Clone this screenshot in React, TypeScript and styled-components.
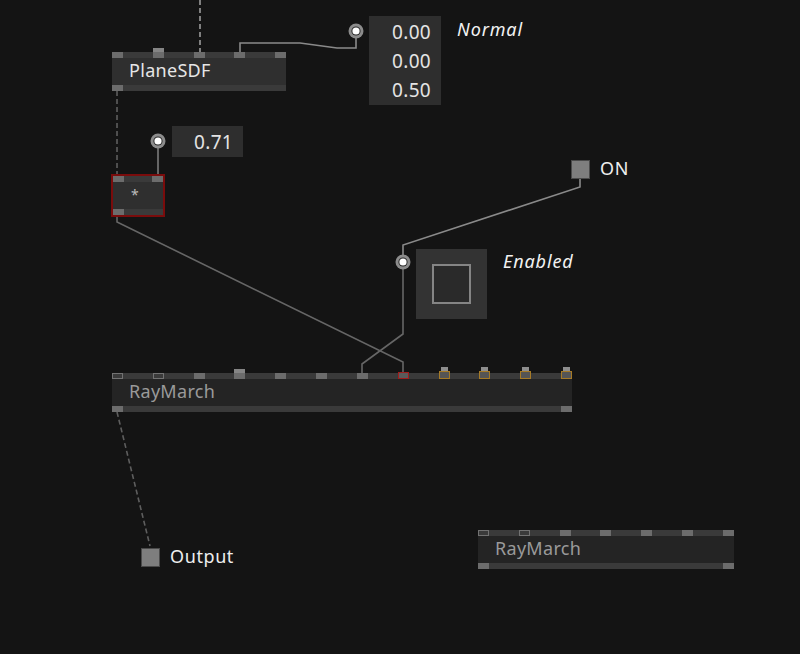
import styled, { createGlobalStyle, css } from 'styled-components';

type PinKind = 'plain' | 'raised' | 'hollow' | 'error' | 'warn';

interface NodeData {
  id: string;
  label: string;
  x: number;
  y: number;
  width: number;
  top: PinKind[];
  bottom: number;
  dim?: boolean;
  selected?: boolean;
  body?: 'light' | 'dark';
}

const NODES: NodeData[] = [
  { id: 'plane', label: 'PlaneSDF', x: 112, y: 52, width: 174, top: ['plain', 'raised', 'plain', 'plain', 'plain'], bottom: 1, body: 'light' },
  { id: 'mul', label: '*', x: 111, y: 174, width: 54, top: ['plain', 'plain'], bottom: 1, selected: true, body: 'light' },
  {
    id: 'ray1',
    label: 'RayMarch',
    x: 112,
    y: 373,
    width: 460,
    top: ['hollow', 'hollow', 'plain', 'raised', 'plain', 'plain', 'plain', 'error', 'warn', 'warn', 'warn', 'warn'],
    bottom: 2,
    dim: true,
  },
  {
    id: 'ray2',
    label: 'RayMarch',
    x: 478,
    y: 530,
    width: 256,
    top: ['hollow', 'hollow', 'plain', 'plain', 'plain', 'plain', 'plain'],
    bottom: 2,
    dim: true,
  },
];

const WIRES = [
  { d: 'M200 0 L200 52', color: '#9c9c9c', dashed: true },
  { d: 'M117 91 L117 175', color: '#5e5e5e', dashed: true },
  { d: 'M117 412 L150 546', color: '#5e5e5e', dashed: true },
  { d: 'M240 52 L240 43 L300 43 L337 48 L356 48 L356 38', color: '#8a8a8a' },
  { d: 'M158 148 L158 175', color: '#7a7a7a' },
  { d: 'M117 214 L117 222 L403 362 L403 373', color: '#666666' },
  { d: 'M580 178 L580 187 L403 245 L403 256', color: '#8a8a8a' },
  { d: 'M403 269 L403 334 L362 364 L362 373', color: '#666666' },
];

const GlobalStyle = createGlobalStyle`
  html, body {
    margin: 0;
    padding: 0;
    background: #141414;
  }
  body {
    font-family: "Noto Sans", "Open Sans", sans-serif;
  }
`;

const PinDot = ({ x, y }: { x: number; y: number }) => (
  <DotWrap $x={x} $y={y}>
    <svg width="16" height="16" viewBox="0 0 16 16">
      <circle cx="8" cy="8" r="7.5" fill="#8c8c8c" />
      <circle cx="8" cy="8" r="4.6" fill="#2a2a2a" />
      <circle cx="8" cy="8" r="3.6" fill="#ffffff" />
    </svg>
  </DotWrap>
);

const App = () => {
  return (
    <>
      <GlobalStyle />
      <Canvas>
        {NODES.map((node) => (
          <Node key={node.id} $x={node.x} $y={node.y} $w={node.width} $selected={node.selected} $body={node.body}>
            <PinBar>
              {node.top.map((kind, i) => (
                <Pin key={i} $kind={kind} />
              ))}
            </PinBar>
            <NodeLabel $dim={node.dim} $small={node.label === '*'}>
              {node.label}
            </NodeLabel>
            <PinBar>
              {Array.from({ length: node.bottom }).map((_, i) => (
                <Pin key={i} $kind="plain" />
              ))}
            </PinBar>
          </Node>
        ))}

        <ValueBox $x={369} $y={16} $w={72}>
          <ValueRow>0.00</ValueRow>
          <ValueRow>0.00</ValueRow>
          <ValueRow>0.50</ValueRow>
        </ValueBox>
        <PinDot x={356} y={31} />
        <Caption $x={457} $y={17}>Normal</Caption>

        <ValueBox $x={172} $y={126} $w={71}>
          <ValueRow>0.71</ValueRow>
        </ValueBox>
        <PinDot x={158} y={141} />

        <Pad $x={571} $y={158}>
          <PadSquare />
          <PadText>ON</PadText>
        </Pad>

        <PinDot x={403} y={262} />
        <ToggleBox>
          <ToggleInner />
        </ToggleBox>
        <Caption $x={503} $y={249}>Enabled</Caption>

        <Pad $x={141} $y={546}>
          <PadSquare />
          <PadText>Output</PadText>
        </Pad>

        <Wires width="800" height="654" viewBox="0 0 800 654">
          {WIRES.map((w, i) => (
            <path
              key={i}
              d={w.d}
              fill="none"
              stroke={w.color}
              strokeWidth={1.6}
              strokeDasharray={w.dashed ? '5 3' : undefined}
            />
          ))}
        </Wires>
      </Canvas>
    </>
  );
};

export default App;

const Canvas = styled.div`
  position: relative;
  width: 800px;
  height: 654px;
  overflow: hidden;
  background: #141414;
`;

const Wires = styled.svg`
  position: absolute;
  left: 0;
  top: 0;
  pointer-events: none;
`;

const Node = styled.div<{ $x: number; $y: number; $w: number; $selected?: boolean; $body?: 'light' | 'dark' }>`
  position: absolute;
  left: ${(p) => p.$x}px;
  top: ${(p) => p.$y}px;
  width: ${(p) => p.$w}px;
  display: flex;
  flex-direction: column;
  background: ${(p) => (p.$body === 'light' ? '#2f2f2f' : '#242424')};
  box-sizing: border-box;
  z-index: 1;
  ${(p) =>
    p.$selected &&
    css`
      border: 2px solid #7a0c0c;
    `}
`;

const PinBar = styled.div`
  display: flex;
  justify-content: space-between;
  align-items: flex-end;
  height: 6px;
  background: #3a3a3a;
`;

const pinStyles = {
  plain: css`
    height: 6px;
    background: #6c6c6c;
  `,
  raised: css`
    height: 10px;
    background: linear-gradient(#858585 0 4px, #6c6c6c 4px);
  `,
  hollow: css`
    height: 6px;
    background: #3a3a3a;
    border: 1px solid #727272;
  `,
  error: css`
    height: 7px;
    background: #5a5a5a;
    border: 1px solid #a01c1c;
  `,
  warn: css`
    height: 8px;
    background: #555;
    border: 1px solid #a67a26;
    &::before {
      content: '';
      position: absolute;
      left: 1px;
      right: 1px;
      top: -5px;
      height: 4px;
      background: #8e8e8e;
    }
  `,
};

const Pin = styled.div<{ $kind: PinKind }>`
  position: relative;
  width: 11px;
  flex: none;
  box-sizing: border-box;
  ${(p) => pinStyles[p.$kind]}
`;

const NodeLabel = styled.div<{ $dim?: boolean; $small?: boolean }>`
  height: 27px;
  padding-left: ${(p) => (p.$small ? '18px' : '17px')};
  padding-bottom: ${(p) => (p.$small ? '0' : '3px')};
  padding-top: ${(p) => (p.$small ? '3px' : '0')};
  display: flex;
  align-items: ${(p) => (p.$small ? 'flex-start' : 'center')};
  box-sizing: border-box;
  font-size: ${(p) => (p.$small ? '14px' : '18px')};
  letter-spacing: ${(p) => (p.$small ? '0' : '0.3px')};
  color: ${(p) => (p.$dim ? '#9a9a9a' : p.$small ? '#bdbdbd' : '#e6e6e6')};
  white-space: nowrap;
`;

const ValueBox = styled.div<{ $x: number; $y: number; $w: number }>`
  position: absolute;
  left: ${(p) => p.$x}px;
  top: ${(p) => p.$y}px;
  width: ${(p) => p.$w}px;
  display: flex;
  flex-direction: column;
  background: #2e2e2e;
  padding: 1px 10px 1px 0;
  box-sizing: border-box;
`;

const ValueRow = styled.div`
  height: 29px;
  display: flex;
  align-items: center;
  justify-content: flex-end;
  font-size: 19px;
  letter-spacing: 0.3px;
  color: #e4e4e4;
`;

const DotWrap = styled.div<{ $x: number; $y: number }>`
  position: absolute;
  left: ${(p) => p.$x - 8}px;
  top: ${(p) => p.$y - 8}px;
  width: 16px;
  height: 16px;
  z-index: 2;
  svg {
    display: block;
  }
`;

const Caption = styled.div<{ $x: number; $y: number }>`
  position: absolute;
  left: ${(p) => p.$x}px;
  top: ${(p) => p.$y}px;
  font-size: 18px;
  font-style: italic;
  letter-spacing: 0.9px;
  color: #f2f2f2;
  line-height: 24px;
`;

const Pad = styled.div<{ $x: number; $y: number }>`
  position: absolute;
  left: ${(p) => p.$x}px;
  top: ${(p) => p.$y}px;
  display: flex;
  align-items: center;
  gap: 10px;
  z-index: 2;
`;

const PadSquare = styled.div`
  width: 19px;
  height: 19px;
  box-sizing: border-box;
  background: #7e7e7e;
  border: 1px solid #4a4a4a;
`;

const PadText = styled.span`
  font-size: 18px;
  letter-spacing: 0.6px;
  color: #eeeeee;
  line-height: 20px;
  padding-bottom: 3px;
`;

const ToggleBox = styled.div`
  position: absolute;
  left: 416px;
  top: 249px;
  width: 71px;
  height: 70px;
  background: #333333;
  display: flex;
  align-items: center;
  justify-content: center;
`;

const ToggleInner = styled.div`
  width: 39px;
  height: 40px;
  box-sizing: border-box;
  border: 2px solid #858585;
  background: #2a2a2a;
`;
